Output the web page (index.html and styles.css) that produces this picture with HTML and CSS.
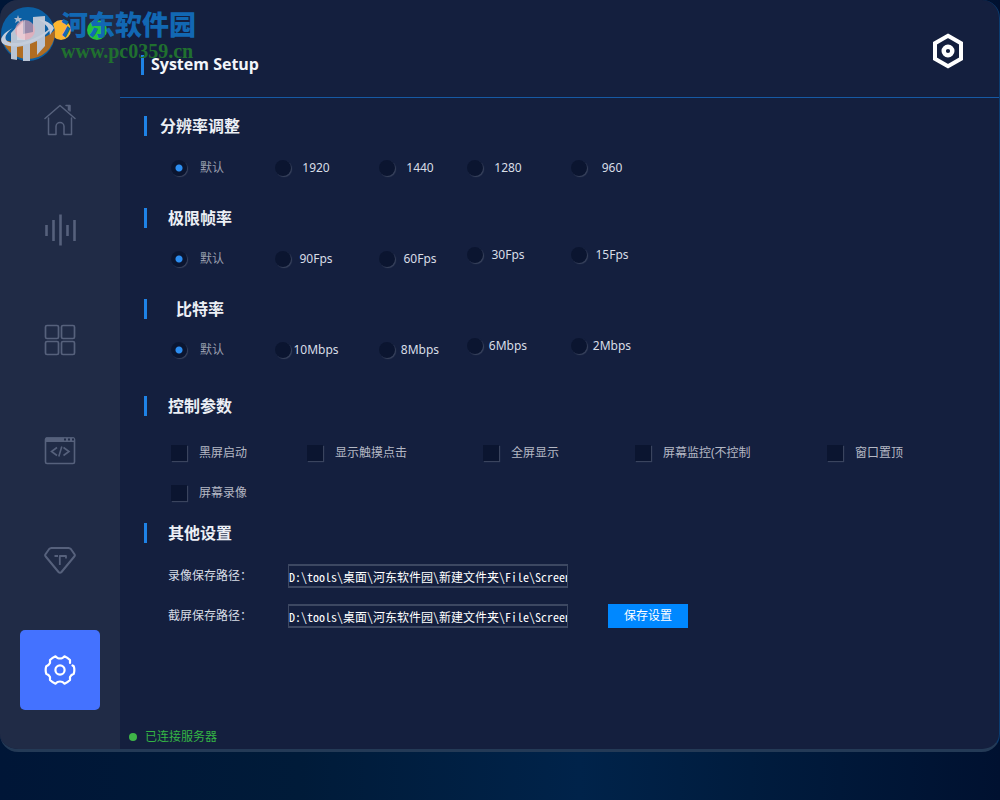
FILE: index.html
```html
<!DOCTYPE html>
<html lang="zh-CN">
<head>
<meta charset="utf-8">
<meta name="viewport" content="width=device-width, initial-scale=1">
<title>System Setup</title>
<link rel="stylesheet" href="styles.css">
</head>
<body>
<div class="window">
  <aside class="sidebar">
    <div class="lights">
      <button class="light red" aria-label="关闭"></button>
      <button class="light yellow" aria-label="最小化"></button>
      <button class="light green" aria-label="最大化"></button>
    </div>
    <nav class="nav">
      <button class="nav-item" aria-label="主页">
        <svg width="32" height="32" viewBox="0 0 32 32" fill="none" stroke="currentColor" stroke-width="1.500" stroke-linejoin="round" stroke-linecap="round"><path d="M1 14.500 16 1.500 31 14.500M4.500 14V30.500h7.500v-8a4 4 0 0 1 8 0v8h7.500V14M22 1.500h4M24.500 1.500V6M26 1.500V7"/></svg>
      </button>
      <button class="nav-item" aria-label="音频">
        <svg width="32" height="32" viewBox="0 0 32 32" fill="none" stroke="currentColor" stroke-width="2.600"><path d="M2.500 11v11M9.500 6v21M16.500 .5v31M23.500 11v11M30.500 6v21"/></svg>
      </button>
      <button class="nav-item" aria-label="应用">
        <svg width="32" height="32" viewBox="0 0 32 32" fill="none" stroke="currentColor" stroke-width="1.700"><rect x="1.500" y="1.500" width="13" height="13" rx="1.500"/><rect x="17.500" y="1.500" width="13" height="13" rx="1.500"/><rect x="1.500" y="17.500" width="13" height="13" rx="1.500"/><rect x="17.500" y="17.500" width="13" height="13" rx="1.500"/></svg>
      </button>
      <button class="nav-item" aria-label="代码">
        <svg width="32" height="32" viewBox="0 0 32 32" fill="none" stroke="currentColor" stroke-width="1.600"><rect x="1.500" y="4" width="29" height="25.500" rx="1.500"/><path d="M2 5.700h28" stroke-width="4.600"/><path d="M20 5.500h2m2 0h2m2 0h2" stroke="#1f2a46" stroke-width="2"/><path d="m13 13.500-5.500 4 5.500 4M19.500 13.500l5.500 4-5.500 4M17.800 12.500l-3 10"/></svg>
      </button>
      <button class="nav-item" aria-label="会员">
        <svg width="32" height="32" viewBox="0 0 32 32" fill="none" stroke="currentColor" stroke-width="2" stroke-linejoin="round"><path d="M7.500 4h17Q26 4 27 5.200l3.500 5q.8 1.200-.2 2.300L17.500 28q-1.500 1.600-3 0L1.700 12.500q-1-1.100-.2-2.300l3.500-5Q6 4 7.500 4z"/><path d="M10.500 12h3.500M15.800 21v-9H22v2.500" stroke-width="1.800"/></svg>
      </button>
      <button class="nav-item active" aria-label="设置">
        <svg width="32" height="32" viewBox="0 0 32 32" fill="none" stroke="currentColor" stroke-width="2.200" stroke-linejoin="round" stroke-linecap="round"><path d="M26 9V6Q23.500 3.500 20.500 2.300L18.500 4q-2.500 1-5 0L11.500 2.300Q8.500 3.500 6 6V9Q5 11 2.300 12.200 1 16 2.300 19.800 5 21 6 23V26Q8.500 28.500 11.500 29.700L13.500 28q2.500-1 5 0L20.500 29.700Q23.500 28.500 26 26V23Q27 21 29.700 19.800 31 16 29.700 12.200L28.500 11.500"/><circle cx="16" cy="16" r="4.600"/></svg>
      </button>
    </nav>
  </aside>

  <main class="main">
    <header class="header">
      <h1 class="title">System Setup</h1>
      <button class="hex" aria-label="选项">
        <svg width="32" height="36" viewBox="0 0 32 36" fill="none" stroke="#fff"><path d="M16 2.800 29 10.200v15.600L16 33.200 3 25.800V10.200z" stroke-width="4"/><circle cx="16" cy="18" r="4.300" stroke-width="4.400"/></svg>
      </button>
    </header>

    <form class="content">
      <section class="group">
        <h2 class="heading"><span>分辨率调整</span></h2>
        <div class="radios">
          <label class="option dim"><input type="radio" name="size" checked><span>默认</span></label>
          <label class="option"><input type="radio" name="size"><span>1920</span></label>
          <label class="option"><input type="radio" name="size"><span>1440</span></label>
          <label class="option"><input type="radio" name="size"><span>1280</span></label>
          <label class="option"><input type="radio" name="size"><span>960</span></label>
        </div>
      </section>

      <section class="group">
        <h2 class="heading"><span>极限帧率</span></h2>
        <div class="radios stepped">
          <label class="option dim"><input type="radio" name="fps" checked><span>默认</span></label>
          <label class="option"><input type="radio" name="fps"><span>90Fps</span></label>
          <label class="option"><input type="radio" name="fps"><span>60Fps</span></label>
          <label class="option raised"><input type="radio" name="fps"><span>30Fps</span></label>
          <label class="option raised"><input type="radio" name="fps"><span>15Fps</span></label>
        </div>
      </section>

      <section class="group">
        <h2 class="heading"><span>比特率</span></h2>
        <div class="radios stepped">
          <label class="option dim"><input type="radio" name="rate" checked><span>默认</span></label>
          <label class="option"><input type="radio" name="rate"><span>10Mbps</span></label>
          <label class="option"><input type="radio" name="rate"><span>8Mbps</span></label>
          <label class="option raised"><input type="radio" name="rate"><span>6Mbps</span></label>
          <label class="option raised"><input type="radio" name="rate"><span>2Mbps</span></label>
        </div>
      </section>

      <section class="group controls">
        <h2 class="heading"><span>控制参数</span></h2>
        <div class="checks">
          <label class="check"><input type="checkbox"><span>黑屏启动</span></label>
          <label class="check"><input type="checkbox"><span>显示触摸点击</span></label>
          <label class="check"><input type="checkbox"><span>全屏显示</span></label>
          <label class="check"><input type="checkbox"><span>屏幕监控(不控制</span></label>
          <label class="check"><input type="checkbox"><span>窗口置顶</span></label>
          <label class="check"><input type="checkbox"><span>屏幕录像</span></label>
        </div>
      </section>

      <section class="group others">
        <h2 class="heading"><span>其他设置</span></h2>
        <div class="paths">
          <label for="video">录像保存路径：</label>
          <input class="path" id="video" type="text" value="D:\tools\桌面\河东软件园\新建文件夹\File\Screen">
          <label class="second" for="shot">截屏保存路径：</label>
          <input class="path" id="shot" type="text" value="D:\tools\桌面\河东软件园\新建文件夹\File\Screen">
          <button class="save" type="button">保存设置</button>
        </div>
      </section>
    </form>

    <footer class="status"><i class="dot"></i>已连接服务器</footer>
  </main>
</div>

<div class="watermark">
  <svg width="56" height="58" viewBox="0 0 56 58">
    <circle cx="28" cy="29" r="27" fill="#0b5fa3"/>
    <path d="M2 34a27 27 0 0 0 53-9C43 36 22 42 2 34z" fill="#b06d22"/>
    <path d="M11 54V28L23 15v14l10-2V12l12-1v30l-8 9V36l-7 3v17h-7V41l-6 1v13z" fill="#b9c4d4"/>
    <path d="M13 23C-1 30-3 39 9 41c15 2 39-8 44-21-8 10-27 19-40 18C3 37 3 30 13 23z" fill="#c4cddb"/>
    <path d="M38 14q12 2 16 9l-4 7q0-9-12-16z" fill="#c4cddb"/>
    <path d="m18 10 1 3h3l-2 2 1 3-3-2-3 2 1-3-2-2h3z" fill="#aab8cc"/>
    <circle cx="25" cy="25" r="10" fill="#f5a3ae" opacity=".6"/>
    <path d="M17 23 25 15v20h-8z" fill="#fff" opacity=".35"/>
  </svg>
  <div class="mark-text">
    <div class="mark-name">河东软件园</div>
    <div class="mark-url">www.pc0359.cn</div>
  </div>
</div>
</body>
</html>
```

FILE: styles.css
```css
* { box-sizing: border-box; }

body {
  margin: 0;
  min-height: 100vh;
  padding-bottom: 48px;
  display: flex;
  background: linear-gradient(90deg, #001637, #001b39 30%, #00234a 58%, #001c3e 75%, #001130);
  color: #d8dde6;
  font: 12px/16px "Noto Sans", "Noto Sans CJK SC", sans-serif;
}

button {
  border: 0;
  padding: 0;
  background: none;
  color: inherit;
  font: inherit;
}

.window {
  flex: 1;
  display: flex;
  overflow: hidden;
  border-bottom: 3px solid #243a56;
  border-right: 1px solid #0b3c70;
  border-radius: 18px;
  background: #141f3e;
}

.sidebar {
  width: 120px;
  flex: none;
  background: #202b46;
}

.lights {
  display: flex;
  gap: 16px;
  padding: 20px 0 40px 15px;
}

.light { width: 20px; height: 20px; border-radius: 50%; }
.red { background: #f0606a; }
.yellow { background: #fbb62f; }
.green { background: #25c43a; }

.nav {
  display: flex;
  flex-direction: column;
  align-items: center;
  gap: 30px;
}

.nav-item {
  width: 80px;
  height: 80px;
  display: grid;
  place-items: center;
  border-radius: 5px;
  color: #56617c;
}

.nav-item.active { background: #4472ff; color: #fff; }

.main {
  flex: 1;
  min-width: 0;
  display: flex;
  flex-direction: column;
}

.header {
  display: flex;
  justify-content: space-between;
  align-items: flex-start;
  height: 98px;
  padding: 33px 35px 0 21px;
  border-bottom: 1px solid #1659a4;
}

.title {
  margin: 22px 0 0;
  padding-left: 7px;
  border-left: 3px solid #1e82e6;
  color: #f2f5fa;
  font: 700 16px/18px "Open Sans", sans-serif;
  padding-bottom: 2px;
}

.hex svg { display: block; }

.content {
  flex: 1;
  display: flex;
  flex-direction: column;
  gap: 32px;
  padding: 18px 24px 0;
}

.heading {
  margin: 0;
  display: flex;
  height: 20px;
  padding-left: 5px;
  border-left: 3px solid #1e82e6;
  font: 700 16px/18px "Noto Sans CJK SC", sans-serif;
  color: #eceff5;
}

.heading span { width: 96px; text-align: center; }

.radios {
  display: grid;
  grid-template-columns: 104px 104px 88px 104px 104px;
  align-items: end;
  padding: 24px 0 0 27px;
}

.radios.stepped { height: 39px; padding-top: 19px; }

.option { display: flex; align-items: center; height: 16px; }
.option span { width: 50px; text-align: center; }
.option.raised { align-self: start; }
.dim { color: #989ead; }

.option input,
.check input {
  appearance: none;
  flex: none;
  margin: 0;
  width: 16px;
  height: 16px;
  background: #0b1530;
  box-shadow: 1px 1px 1px #3a445e;
}

.option input { border-radius: 50%; }

.option input:checked {
  background: radial-gradient(circle at 50% 50%, #2c8df0 0 3px, #0b1530 4px);
}

.controls { margin-top: 6px; }

.checks {
  display: grid;
  grid-template-columns: 136px 176px 152px 192px auto;
  row-gap: 24px;
  padding: 29px 0 0 27px;
  color: #b4b8c4;
}

.check { display: flex; align-items: center; gap: 12px; height: 16px; }

.others { margin-top: -10px; }

.paths {
  display: grid;
  grid-template-columns: 120px 280px 80px;
  gap: 16px 0;
  align-items: center;
  padding: 21px 0 0 24px;
}

.paths .second { grid-column: 1; }

.path {
  width: 100%;
  height: 24px;
  padding: 0;
  border: 2px solid #3d4862;
  border-width: 2px 1px;
  background: #141f3e;
  color: #fff;
  font: 12px/16px "Noto Sans Mono CJK SC", "Noto Sans CJK SC", monospace;
}

.save {
  margin-left: 40px;
  width: 80px;
  height: 24px;
  background: #0088ff;
  color: #fff;
}

.status {
  display: flex;
  align-items: center;
  gap: 8px;
  padding: 0 9px 4px;
  color: #34b545;
}

.dot { width: 8px; height: 8px; border-radius: 50%; background: #3fb548; }

.watermark {
  position: absolute;
  top: 5px;
  left: 0;
  display: flex;
  gap: 5px;
  pointer-events: none;
}

.mark-name {
  font: 900 27px/38px "Noto Sans CJK SC", sans-serif;
  color: #1268b3;
}

.mark-url {
  font: bold 20px/16px "Liberation Serif", serif;
  color: #20702f;
}
```
